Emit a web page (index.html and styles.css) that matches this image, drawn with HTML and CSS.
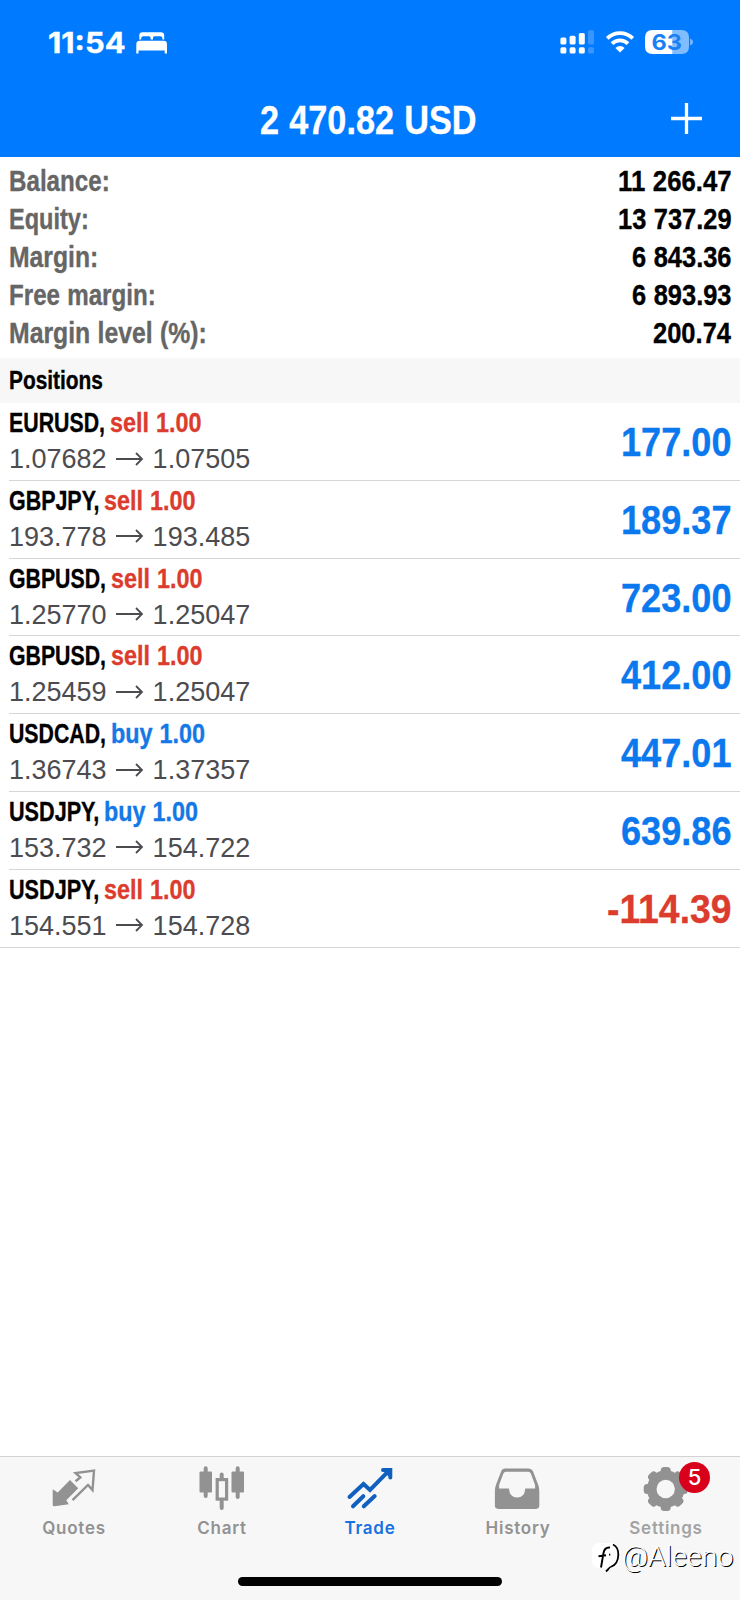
FILE: index.html
```html
<!DOCTYPE html>
<html lang="en">
<head>
<meta charset="utf-8">
<title>Trade</title>
<link rel="stylesheet" href="styles.css">
</head>
<body>
<div class="screen">
  <header class="header">
    <div class="status">
      <svg class="clock" width="78" height="30"><text y="26.5" textLength="77.5" lengthAdjust="spacingAndGlyphs">11:54</text></svg>
      <svg class="bed" width="32" height="22" viewBox="0 0 32 22"><path d="M3.3 7.6V3.5Q3.3.3 6.5.3H25Q28.2.3 28.2 3.5V7.6H26.4V6.2Q26.4 4.2 24.4 4.2H18.6Q17 4.2 17 5.8V7.6H14.6V5.8Q14.6 4.2 13 4.2H7.2Q5.2 4.2 5.2 6.2V7.6ZM4 8.8H27.6Q31 8.8 31 12.2V21.4H28.7V18.6H2.5V21.4H.3V12.2Q.3 8.8 4 8.8Z"/></svg>
      <div class="indicators">
        <svg width="34" height="24" viewBox="0 0 34 24">
          <rect x=".4" y="7.5" width="6" height="7" rx="1.6"/><rect x="9.6" y="5.7" width="6" height="8.8" rx="1.6"/><rect x="18.8" y="3" width="6" height="11.5" rx="1.6"/>
          <rect x=".4" y="17.3" width="6" height="6.2" rx="1.6"/><rect x="9.6" y="17.3" width="6" height="6.2" rx="1.6"/><rect x="18.8" y="17.3" width="6" height="6.2" rx="1.6"/>
          <g opacity=".22"><rect x="28" y=".2" width="6" height="14.3" rx="1.6"/><rect x="28" y="17.3" width="6" height="6.2" rx="1.6"/></g>
        </svg>
        <svg class="wifi" width="30" height="24" viewBox="0 0 30 24">
          <path d="M2.2 8.3A18.2 18.2 0 0 1 27.8 8.3M7 13.6A11.3 11.3 0 0 1 23 13.6" fill="none" stroke="#fff" stroke-width="3.8"/>
          <path d="M15 22.6L10.4 17.9A6.5 6.5 0 0 1 19.6 17.9Z"/>
        </svg>
        <svg class="battery" width="48" height="24" viewBox="0 0 48 24">
          <path class="dim" d="M27.5 0H36.5Q44 0 44 7.5V16.5Q44 24 36.5 24H27.5ZM45.2 8.5Q48 9.5 48 12T45.2 15.5Z"/>
          <path d="M7.5 0H27.5V24H7.5Q0 24 0 16.5V7.5Q0 0 7.5 0Z"/>
          <text x="6.5" y="20" textLength="30.5" lengthAdjust="spacingAndGlyphs">63</text>
        </svg>
      </div>
    </div>
    <div class="titlebar">
      <svg class="cond title" width="217" height="50"><text y="40.3" textLength="259.3" lengthAdjust="spacingAndGlyphs">2 470.82 USD</text></svg>
      <svg class="plus" width="31" height="31" viewBox="0 0 31 31"><path d="M15.5 0V31M0 15.5H31"/></svg>
    </div>
  </header>

  <section class="summary">
    <div class="stat"><svg class="cond" width="101.5" height="38"><text y="27.9" textLength="124.4" lengthAdjust="spacingAndGlyphs">Balance:</text></svg><svg class="cond value" width="113.5" height="38"><text y="27.9" textLength="132" lengthAdjust="spacingAndGlyphs">11 266.47</text></svg></div>
    <div class="stat"><svg class="cond" width="80" height="38"><text y="27.9" textLength="98.5" lengthAdjust="spacingAndGlyphs">Equity:</text></svg><svg class="cond value" width="113.5" height="38"><text y="27.9" textLength="132" lengthAdjust="spacingAndGlyphs">13 737.29</text></svg></div>
    <div class="stat"><svg class="cond" width="90" height="38"><text y="27.9" textLength="110.2" lengthAdjust="spacingAndGlyphs">Margin:</text></svg><svg class="cond value" width="99.5" height="38"><text y="27.9" textLength="115.7" lengthAdjust="spacingAndGlyphs">6 843.36</text></svg></div>
    <div class="stat"><svg class="cond" width="147" height="38"><text y="27.9" textLength="181.2" lengthAdjust="spacingAndGlyphs">Free margin:</text></svg><svg class="cond value" width="99.5" height="38"><text y="27.9" textLength="115.7" lengthAdjust="spacingAndGlyphs">6 893.93</text></svg></div>
    <div class="stat"><svg class="cond" width="198" height="38"><text y="27.9" textLength="244.2" lengthAdjust="spacingAndGlyphs">Margin level (%):</text></svg><svg class="cond value" width="78" height="38"><text y="27.9" textLength="90.7" lengthAdjust="spacingAndGlyphs">200.74</text></svg></div>
  </section>

  <h2 class="section"><svg class="cond" width="94" height="44"><text y="31.2" textLength="114.6" lengthAdjust="spacingAndGlyphs">Positions</text></svg></h2>

  <main class="positions">
    <article class="row">
      <div class="info">
        <div class="deal"><svg class="cond" width="96" height="36"><text y="29" textLength="126.3" lengthAdjust="spacingAndGlyphs">EURUSD,</text></svg><svg class="cond sell" width="92" height="36"><text y="29" textLength="109.6" lengthAdjust="spacingAndGlyphs">sell 1.00</text></svg></div>
        <div class="prices"><span>1.07682</span><svg class="arrow" width="27" height="14" viewBox="0 0 27 14"><path d="M0 7H26M20 1L26 7L20 13"/></svg><span>1.07505</span></div>
      </div>
      <svg class="cond profit" width="110.5" height="60"><text y="53.4" textLength="126.3" lengthAdjust="spacingAndGlyphs">177.00</text></svg>
    </article>
    <article class="row">
      <div class="info">
        <div class="deal"><svg class="cond" width="90.5" height="36"><text y="29" textLength="119.1" lengthAdjust="spacingAndGlyphs">GBPJPY,</text></svg><svg class="cond sell" width="92" height="36"><text y="29" textLength="109.6" lengthAdjust="spacingAndGlyphs">sell 1.00</text></svg></div>
        <div class="prices"><span>193.778</span><svg class="arrow" width="27" height="14" viewBox="0 0 27 14"><path d="M0 7H26M20 1L26 7L20 13"/></svg><span>193.485</span></div>
      </div>
      <svg class="cond profit" width="110.5" height="60"><text y="53.4" textLength="126.3" lengthAdjust="spacingAndGlyphs">189.37</text></svg>
    </article>
    <article class="row">
      <div class="info">
        <div class="deal"><svg class="cond" width="97" height="36"><text y="29" textLength="127.6" lengthAdjust="spacingAndGlyphs">GBPUSD,</text></svg><svg class="cond sell" width="92" height="36"><text y="29" textLength="109.6" lengthAdjust="spacingAndGlyphs">sell 1.00</text></svg></div>
        <div class="prices"><span>1.25770</span><svg class="arrow" width="27" height="14" viewBox="0 0 27 14"><path d="M0 7H26M20 1L26 7L20 13"/></svg><span>1.25047</span></div>
      </div>
      <svg class="cond profit" width="110.5" height="60"><text y="53.4" textLength="126.3" lengthAdjust="spacingAndGlyphs">723.00</text></svg>
    </article>
    <article class="row">
      <div class="info">
        <div class="deal"><svg class="cond" width="97" height="36"><text y="29" textLength="127.6" lengthAdjust="spacingAndGlyphs">GBPUSD,</text></svg><svg class="cond sell" width="92" height="36"><text y="29" textLength="109.6" lengthAdjust="spacingAndGlyphs">sell 1.00</text></svg></div>
        <div class="prices"><span>1.25459</span><svg class="arrow" width="27" height="14" viewBox="0 0 27 14"><path d="M0 7H26M20 1L26 7L20 13"/></svg><span>1.25047</span></div>
      </div>
      <svg class="cond profit" width="110.5" height="60"><text y="53.4" textLength="126.3" lengthAdjust="spacingAndGlyphs">412.00</text></svg>
    </article>
    <article class="row">
      <div class="info">
        <div class="deal"><svg class="cond" width="97" height="36"><text y="29" textLength="127.6" lengthAdjust="spacingAndGlyphs">USDCAD,</text></svg><svg class="cond buy" width="95" height="36"><text y="29" textLength="112.6" lengthAdjust="spacingAndGlyphs">buy 1.00</text></svg></div>
        <div class="prices"><span>1.36743</span><svg class="arrow" width="27" height="14" viewBox="0 0 27 14"><path d="M0 7H26M20 1L26 7L20 13"/></svg><span>1.37357</span></div>
      </div>
      <svg class="cond profit" width="110.5" height="60"><text y="53.4" textLength="126.3" lengthAdjust="spacingAndGlyphs">447.01</text></svg>
    </article>
    <article class="row">
      <div class="info">
        <div class="deal"><svg class="cond" width="90" height="36"><text y="29" textLength="118.6" lengthAdjust="spacingAndGlyphs">USDJPY,</text></svg><svg class="cond buy" width="95" height="36"><text y="29" textLength="112.6" lengthAdjust="spacingAndGlyphs">buy 1.00</text></svg></div>
        <div class="prices"><span>153.732</span><svg class="arrow" width="27" height="14" viewBox="0 0 27 14"><path d="M0 7H26M20 1L26 7L20 13"/></svg><span>154.722</span></div>
      </div>
      <svg class="cond profit" width="110.5" height="60"><text y="53.4" textLength="126.3" lengthAdjust="spacingAndGlyphs">639.86</text></svg>
    </article>
    <article class="row">
      <div class="info">
        <div class="deal"><svg class="cond" width="90" height="36"><text y="29" textLength="118.6" lengthAdjust="spacingAndGlyphs">USDJPY,</text></svg><svg class="cond sell" width="92" height="36"><text y="29" textLength="109.6" lengthAdjust="spacingAndGlyphs">sell 1.00</text></svg></div>
        <div class="prices"><span>154.551</span><svg class="arrow" width="27" height="14" viewBox="0 0 27 14"><path d="M0 7H26M20 1L26 7L20 13"/></svg><span>154.728</span></div>
      </div>
      <svg class="cond profit loss" width="124.5" height="60"><text y="53.4" textLength="142.3" lengthAdjust="spacingAndGlyphs">-114.39</text></svg>
    </article>
  </main>

  <footer class="tabbar">
    <nav class="tabs">
      <div class="tab">
        <svg width="48" height="47" viewBox="0 0 48 47"><path d="M2.7 18.3L7.7 21.5L20 9L28.2 17.2L16.3 29.3L18.8 33.2L4.5 35.3Q2.7 35.4 2.7 33.8Z"/><path d="M25.5 10.3L30.3 6.4L25.5 2L44-.4L42.5 19L38 14L22.5 29.1" fill="none" stroke="#929292" stroke-width="2.4"/></svg>
        <span>Quotes</span>
      </div>
      <div class="tab">
        <svg width="48" height="47" viewBox="0 0 48 47"><rect x="1.5" y=".5" width="12.5" height="21" rx="1"/><rect x="33.5" y=".5" width="12.5" height="21" rx="1"/><path d="M7.7-2.7V25M39.7-2.7V26M23.7 3.5V8M23.7 30V37" stroke="#929292" stroke-width="4" stroke-linecap="round"/><rect x="19.2" y="8.6" width="9.4" height="19.5" fill="none" stroke="#929292" stroke-width="3.2"/></svg>
        <span>Chart</span>
      </div>
      <div class="tab active">
        <svg width="48" height="47" viewBox="0 0 48 47"><path d="M3.5 26L17.5 13L24 19L43-.3M7 35.3L17.3 25.2M17.8 35.3L28.7 25"/><path d="M37-1H44.3V6.500M40 0L43.500 3.500"/></svg>
        <span>Trade</span>
      </div>
      <div class="tab">
        <svg width="48" height="47" viewBox="0 0 48 47"><path transform="translate(-.9 .6)" fill-rule="evenodd" d="M12-3H35Q38.6-3 40 0L45 13Q46.2 16 46.2 20V34Q46.2 37.3 43 37.3H5Q1.8 37.3 1.8 34V20Q1.8 16 3 13L8 0Q9-3 12-3ZM12.8.2Q11 .2 10.3 2L6 13.5V16.8H15.8Q16.6 26 24 26T32.2 16.8H42V13.5L37.7 2Q37 .2 35.2.2Z"/></svg>
        <span>History</span>
      </div>
      <div class="tab settings">
        <svg width="48" height="47" viewBox="0 0 48 47"><g transform="translate(23.7 18)"><rect x="-5" y="-22" width="10" height="44" rx="3.5"/><rect x="-5" y="-22" width="10" height="44" rx="3.5" transform="rotate(45)"/><rect x="-5" y="-22" width="10" height="44" rx="3.5" transform="rotate(90)"/><rect x="-5" y="-22" width="10" height="44" rx="3.5" transform="rotate(135)"/><circle r="18.7"/><circle r="9.2" fill="#f7f7f7"/></g></svg>
        <span>Settings</span>
        <b class="badge">5</b>
      </div>
    </nav>
    <div class="home"></div>
    <div class="watermark">
      <svg width="30" height="30" viewBox="0 0 30 30"><rect x="0" y="1" width="27" height="25" rx="7" fill="#fff"/><path d="M21 2.500Q26.500 5 26.300 13Q26 22 19.500 24.500Q17.500 25 16 27.500L14 29.500" fill="none" stroke="#000" stroke-width="1.8"/><path d="M18 5.500Q12.500 5 11.500 11L9 25.500M6.500 14.300L14 13.300M17 12.600H18.300" fill="none" stroke="#000" stroke-width="1.9"/></svg>
      <span>@Aleeno</span>
    </div>
  </footer>
</div>
</body>
</html>
```
FILE: styles.css
```css
* { box-sizing: border-box; }
body { margin: 0; background: #fff; font-family: "Liberation Sans", Arial, sans-serif; }
svg { display: block; flex: none; overflow: visible; }

.screen { width: 740px; height: 1600px; display: flex; flex-direction: column; background: #fff; overflow: hidden; }

/* Condensed bold labels */
.cond { font: 700 29px "Liberation Sans", Arial, sans-serif; fill: #000; }
.cond text { transform: scaleX(.81); stroke: currentColor; stroke-width: .35px; word-spacing: .02em; }

.header { height: 157px; background: #007aff; color: #fff; fill: #fff; flex: none; }
.status { display: flex; align-items: flex-start; padding: 26px 47px 0 48px; height: 94px; }
.clock { font: 700 28px Inter, sans-serif; stroke: #fff; stroke-width: .4px; }
.bed { margin: 6px 0 0 10px; }
.indicators { display: flex; margin: 4px 0 0 auto; }
.wifi { margin-left: 10.5px; }
.battery { margin-left: 10.5px; font: 700 21.5px Inter, sans-serif; }
.battery .dim { fill: #80bdff; }
.battery text { fill: #1a80f5; }
.titlebar { display: grid; grid-template-columns: 1fr 217px 1fr; align-items: start; padding: 0 38px 0 36px; }
.cond.title { grid-column: 2; margin-left: -.5px; fill: #fff; font-size: 41.5px; color: #fff; }
.title text { transform: scaleX(.835); }
.plus { justify-self: end; margin-top: 9px; stroke: #fff; stroke-width: 3.3; }

.summary { padding: 6px 9px 0 8.5px; height: 201px; flex: none; }
.stat { display: flex; justify-content: space-between; height: 38px; }
.stat .cond { fill: #666; color: #666; }
.stat .value { fill: #000; color: #000; }
.value text { transform: scaleX(.86); }

.section { margin: 0; height: 45px; padding-left: 8.5px; background: #f7f7f7; flex: none; }
.section .cond { font-size: 25.5px; }
.section text { transform: scaleX(.82); }

.positions { flex: none; border-bottom: 1px solid #d6d6d6; }
.row { display: flex; justify-content: space-between; height: 77.75px; margin-left: 8.5px; padding-right: 9px; border-bottom: 1px solid #d6d6d6; }
.row:last-child { border-bottom: 0; }
.deal { display: flex; gap: 5.3px; height: 36px; }
.deal .cond { font-size: 28.2px; }
.deal text { transform: scaleX(.76); }
.deal .sell text, .deal .buy text { transform: scaleX(.835); }
.deal .sell { fill: #dc3c2e; color: #dc3c2e; }
.deal .buy { fill: #1478e6; color: #1478e6; }
.prices { display: flex; align-items: center; height: 40px; padding-left: .5px; font-size: 27px; line-height: 40px; color: #4c4c50; }
.arrow { margin: 0 9.5px 1px 9.5px; fill: none; stroke: #4c4c50; stroke-width: 1.8; }
.cond.profit { font-size: 41.5px; fill: #0c78ee; color: #0c78ee; }
.profit text { transform: scaleX(.875); }
.cond.loss { fill: #dc3c2e; color: #dc3c2e; }

.tabbar { position: relative; margin-top: auto; height: 144px; flex: none; background: #f7f7f7; border-top: 1px solid #d3d3d3; }
.tabs { display: grid; grid-template-columns: repeat(5, 1fr); height: 120px; }
.tab { position: relative; display: flex; flex-direction: column; align-items: center; padding-top: 14px; color: #929292; fill: #929292; font: 600 17px/20px Inter, sans-serif; letter-spacing: .75px; }
.active { color: #1873e0; }
.active svg { fill: none; stroke: #1060c0; stroke-width: 4; stroke-linecap: round; stroke-linejoin: miter; }
.settings { color: #a3a3a3; }
.badge { position: absolute; left: 87px; top: 4.5px; width: 31px; height: 31px; border-radius: 50%; background: #d8001b; color: #fff; font: 500 22px/31px Inter, sans-serif; letter-spacing: 0; text-align: center; }
.home { width: 264px; height: 9px; margin: 0 auto; border-radius: 5px; background: #000; }
.watermark { position: absolute; left: 592px; top: 85px; display: flex; align-items: center; font: 300 28.5px/30px Roboto, sans-serif; color: #fff; text-shadow: 1px 1px 0 #000; }
```
